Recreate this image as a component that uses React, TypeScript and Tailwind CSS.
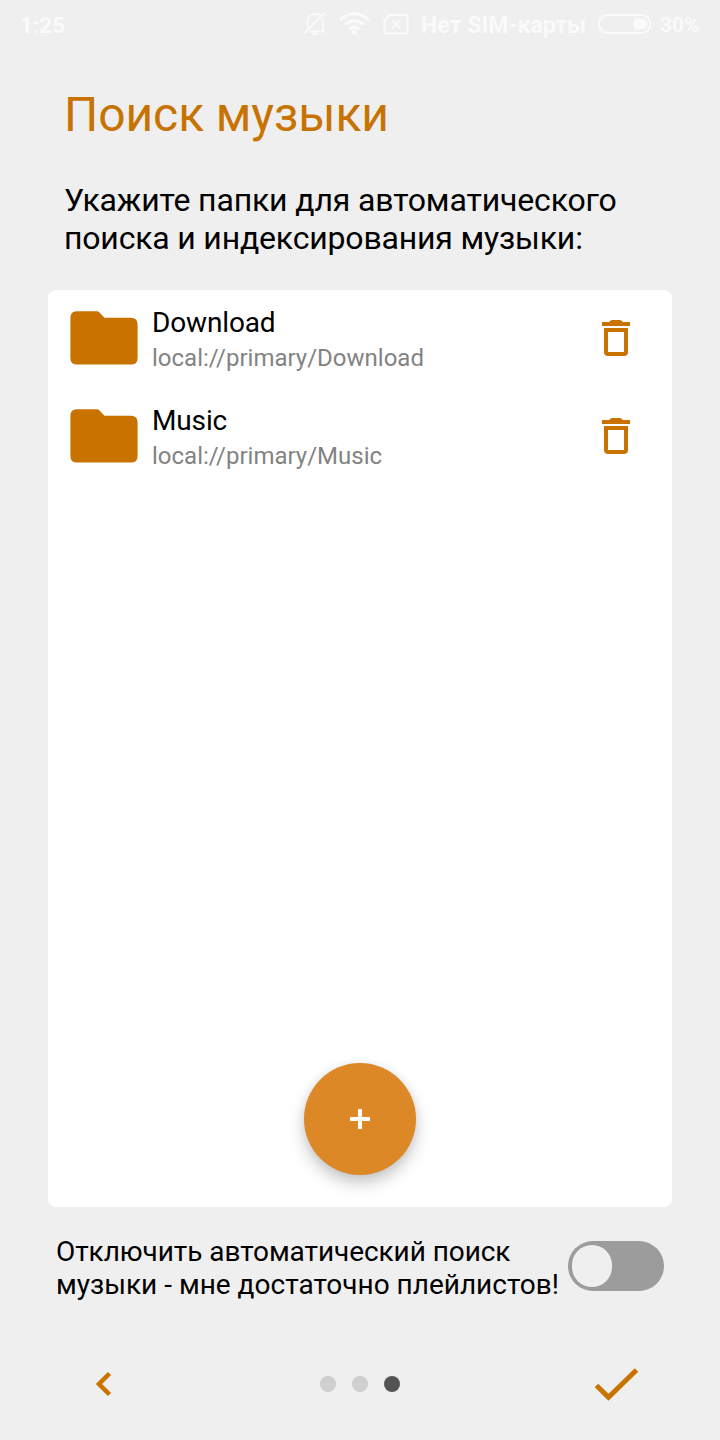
const folders = [
  { name: 'Download', path: 'local://primary/Download' },
  { name: 'Music', path: 'local://primary/Music' },
];

function StatusBar() {
  return (
    <header className="flex h-12 shrink-0 items-center pl-5 text-[22.5px] leading-[26px] font-bold whitespace-nowrap text-[#fafafa]">
      <span className="mt-px w-[283px] shrink-0">1:25</span>
      <svg className="h-[26px] w-6 shrink-0" viewBox="0 0 24 26" fill="none" stroke="currentColor" strokeWidth="1.8">
        <path d="M4.500 17.500C5 15.500 4.500 13.500 4.500 10.500C4.500 6 7 3 12 3C14.500 3 16.500 3.800 17.800 5.200M19.500 8C20.500 12 19 17 21 20.500H6M1 22.500L21.500 2M9.500 23H14.500" />
      </svg>
      <svg className="ml-3 h-[26px] w-[31px] shrink-0" viewBox="0 0 31 26" fill="none" stroke="currentColor" strokeWidth="3">
        <path d="M1 9Q15.500 -3.500 30 9M5.800 13.700Q15.500 5.500 25.200 13.700M10.300 18.200Q15.500 14 20.700 18.200" />
        <circle cx="15.500" cy="21" r="2.600" fill="currentColor" stroke="none" />
      </svg>
      <svg className="ml-[13px] h-[22px] w-[26px] shrink-0" viewBox="0 0 26 22" fill="none" stroke="currentColor" strokeWidth="2">
        <path d="M7 2H22.500Q24.500 2 24.500 4V18.500Q24.500 20.500 22.500 20.500H3.500Q1.500 20.500 1.500 18.500V7.500ZM9.500 7L17.500 15.500M17.500 7L9.500 15.500" />
      </svg>
      <span className="mt-[3px] ml-3 w-[165px] shrink-0 text-[23px] tracking-[0.05px]">Нет SIM-карты</span>
      <svg className="ml-3 h-[22px] w-[55px] shrink-0" viewBox="0 0 55 22" fill="none" stroke="currentColor" strokeWidth="2">
        <rect x="1" y="2" width="51.500" height="18" rx="9" />
        <path d="M37 5.500H44C51.500 5.500 51.500 16.500 44 16.500H37Q36 16.500 36 15.500V6.500Q36 5.500 37 5.500Z" fill="currentColor" stroke="none" />
      </svg>
      <span className="mt-px ml-[7px] shrink-0 text-[21px]">30%</span>
    </header>
  );
}

function FolderRow({ name, path }: { name: string; path: string }) {
  return (
    <li className="flex h-[98px] items-start pr-10 pl-[22px]">
      <svg className="mt-[21px] h-[54px] w-[68px] shrink-0" viewBox="0 0 68 54" fill="#c87200">
        <path d="M6.500 0.300H27Q28.300 0.300 29.500 1.500L34.500 6.700H61Q67.600 6.700 67.600 13.300V47Q67.600 53.600 61 53.600H7Q0.400 53.600 0.400 47V7Q0.400 0.300 6.500 0.300Z" />
      </svg>
      <div className="mt-4 ml-[14px] flex-1 whitespace-nowrap">
        <div className="text-[28px] leading-[33px] tracking-[-0.15px] text-black">{name}</div>
        <div className="mt-[5px] text-[24px] leading-[28px] text-[#838383]">{path}</div>
      </div>
      <button className="mt-[30px] h-9 w-8 shrink-0" aria-label="Удалить">
        <svg className="h-9 w-8" viewBox="0 0 32 36" fill="#c87200">
          <path d="M2 2H9Q11 0 12 0H20Q21 0 23 2H30V6H2Z" />
          <path fillRule="evenodd" d="M4 8H28V32Q28 36 24 36H8Q4 36 4 32ZM8 12V32H24V12Z" />
        </svg>
      </button>
    </li>
  );
}

export default function App() {
  return (
    <div className="flex h-[1440px] w-[720px] flex-col bg-[#efefef] font-['Roboto',sans-serif]">
      <StatusBar />
      <h1 className="mt-[39px] ml-16 text-[48px] leading-[56px] tracking-[-0.08px] whitespace-nowrap text-[#c87200]">Поиск музыки</h1>
      <p className="mt-[38px] ml-16 h-[76px] text-[32px] leading-[38px] tracking-[-0.15px] whitespace-nowrap text-black">
        Укажите папки для автоматического
        <br />
        <span className="tracking-[-0.18px]">поиска и индексирования музыки:</span>
      </p>
      <main className="mx-12 mt-[33px] flex h-[917px] shrink-0 flex-col rounded-lg bg-white">
        <ul className="flex-1">
          {folders.map((folder) => (
            <FolderRow key={folder.name} name={folder.name} path={folder.path} />
          ))}
        </ul>
        <button
          className="mb-8 flex size-28 items-center justify-center self-center rounded-full bg-[#dc8826] shadow-[0_8px_16px_rgba(0,0,0,0.22),0_0_8px_rgba(0,0,0,0.06)]"
          aria-label="Добавить папку"
        >
          <svg className="size-5" viewBox="0 0 20 20" fill="white">
            <path d="M8 0H12V8H20V12H12V20H8V12H0V8H8Z" />
          </svg>
        </button>
      </main>
      <section className="mt-[28px] flex h-[66px] shrink-0 items-start justify-between pr-14 pl-14">
        <p className="text-[28px] leading-[33px] whitespace-nowrap text-black">
          <span className="tracking-[-0.07px]">Отключить автоматический поиск</span>
          <br />
          музыки - мне достаточно плейлистов!
        </p>
        <button role="switch" aria-checked={false} aria-label="Отключить автоматический поиск" className="mt-[6px] flex h-[50px] w-24 items-center rounded-full bg-[#9c9c9c] pl-1">
          <span className="h-[42px] w-10 rounded-full bg-[#efefef]" />
        </button>
      </section>
      <nav className="mt-[51px] flex h-16 items-center justify-between px-20">
        <button className="flex size-12 items-center justify-center" aria-label="Назад">
          <svg className="size-8" viewBox="0 0 32 32" fill="none" stroke="#c87200" strokeWidth="4.500">
            <path d="M21.500 5.500L11 16L21.500 26.500" />
          </svg>
        </button>
        <div className="flex gap-4">
          <span className="size-4 rounded-full bg-[#cfcfcf]" />
          <span className="size-4 rounded-full bg-[#cfcfcf]" />
          <span className="size-4 rounded-full bg-[#535353]" />
        </div>
        <button className="flex size-12 items-center justify-center" aria-label="Готово">
          <svg className="size-12" viewBox="0 0 48 48" fill="none" stroke="#c87200" strokeWidth="5">
            <path d="M4.500 25.500L16.500 37.200L44.500 10" />
          </svg>
        </button>
      </nav>
    </div>
  );
}
